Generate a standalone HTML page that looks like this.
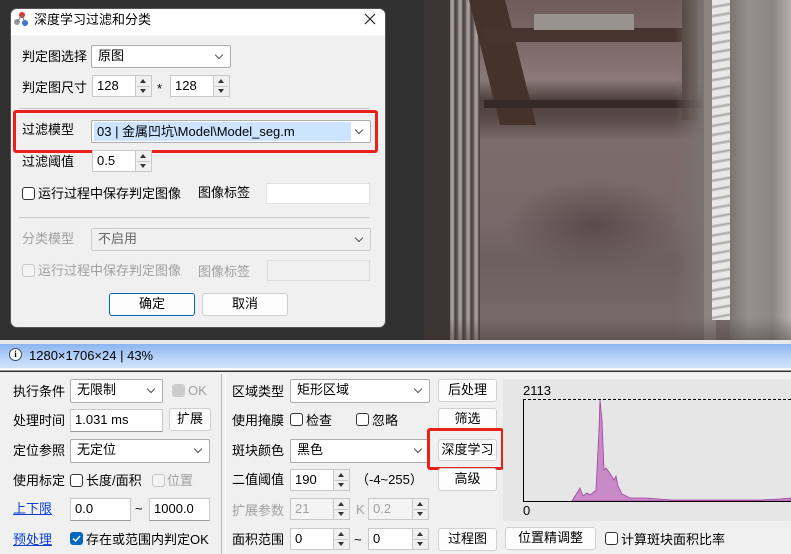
<!DOCTYPE html>
<html><head><meta charset="utf-8">
<style>
*{box-sizing:border-box;margin:0;padding:0}
body{width:791px;height:554px;overflow:hidden;position:relative;background:#303030;font-family:"Liberation Sans","Noto Sans CJK SC",sans-serif;font-size:13px;color:#000}
.a{position:absolute;white-space:nowrap}
.t{position:absolute;white-space:nowrap;line-height:16px}
.combo{position:absolute;background:#fff;border:1px solid #adadad;border-radius:2px;padding-left:6px;line-height:20px}
.combo:after{content:"";position:absolute;right:8px;top:6px;width:5px;height:5px;border-right:1px solid #555;border-bottom:1px solid #555;transform:rotate(45deg)}
.inp{position:absolute;background:#fff;border:1px solid #c8c8c8;border-bottom-color:#999;padding-left:4px;line-height:20px}
.spin{position:absolute;background:#fff;border:1px solid #c8c8c8;padding-left:4px;line-height:20px}
.spin i{position:absolute;right:0;top:0;width:16px;height:100%;background:#f0f0f0;border-left:1px solid #c8c8c8}
.spin i:before{content:"";position:absolute;left:4px;top:3px;border:3px solid transparent;border-bottom:4px solid #333;border-top:none}
.spin i:after{content:"";position:absolute;left:4px;bottom:3px;border:3px solid transparent;border-top:4px solid #333;border-bottom:none}
.spin i b{position:absolute;left:1px;right:1px;top:50%;border-top:1px solid #c8c8c8}
.btn{position:absolute;background:#fdfdfd;border:1px solid #d0d0d0;border-radius:3px;text-align:center;line-height:20px}
.cb{position:absolute;width:13px;height:13px;border:1px solid #333;border-radius:3px;background:#fff}
.dis{color:#a0a0a0}
.dis.cb,.cb.dis{border-color:#c8c8c8;background:#f4f4f4}
.link{color:#0a3fd6;text-decoration:underline}
</style></head><body>

<!-- photo -->
<div class="a" style="left:424px;top:0;width:367px;height:340px;overflow:hidden;background:#776866">
  <!-- floor -->
  <div class="a" style="left:0;top:0;width:367px;height:340px;background:linear-gradient(180deg,#6e5c58 0,#7e6c6a 50px,#8a7a78 80px,#4c403c 100px,#5a4c48 120px,#7c6c6a 140px,#786a68 220px,#6c605e 260px,#7a6e6c 340px)"></div>
  <div class="a" style="left:80px;top:180px;width:180px;height:90px;border-radius:50%;background:radial-gradient(#5a4c4a,rgba(90,76,74,0) 70%)"></div>
  <!-- left bars -->
  <div class="a" style="left:0;top:0;width:26px;height:340px;background:#3a3434"></div>
  <div class="a" style="left:26px;top:0;width:30px;height:340px;background:repeating-linear-gradient(90deg,#8a8280 0,#b0a8a4 3px,#4a4040 5px,#6a605c 8px)"></div>
  <!-- bracket -->
  <div class="a" style="left:45px;top:0;width:36px;height:125px;background:#45322a;transform:skewX(14deg);transform-origin:top"></div>
  <div class="a" style="left:60px;top:28px;width:200px;height:14px;background:#46352e"></div>
  <div class="a" style="left:110px;top:14px;width:100px;height:16px;background:#9a928c"></div>
  <div class="a" style="left:258px;top:0;width:16px;height:120px;background:#4a3a32"></div>
  <div class="a" style="left:60px;top:100px;width:220px;height:8px;background:#352a26"></div>
  <!-- right rail -->
  <div class="a" style="left:250px;top:0;width:30px;height:340px;background:linear-gradient(90deg,rgba(0,0,0,0),#7a7270)"></div>
  <div class="a" style="left:280px;top:0;width:12px;height:340px;background:#8c8482"></div>
  <div class="a" style="left:288px;top:0;width:18px;height:320px;background:repeating-linear-gradient(170deg,#e8e8e8 0,#e8e8e8 5px,#a8a4a2 7px,#e0e0e0 9px)"></div>
  <div class="a" style="left:306px;top:0;width:61px;height:340px;background:linear-gradient(90deg,#7a7472,#94908c 30%,#8a8682 70%,#b4b0ae)"></div>
  <div class="a" style="left:0;top:318px;width:367px;height:22px;background:linear-gradient(180deg,rgba(0,0,0,0),rgba(60,50,48,.4))"></div>
</div>

<!-- dialog -->
<div class="a" style="left:10px;top:8px;width:376px;height:320px;background:#f0f0f0;border-radius:7px;overflow:hidden;border:1px solid #555">
  <div class="a" style="left:0;top:0;width:376px;height:26px;background:#fff"></div>
</div>
<svg class="a" style="left:13px;top:11px" width="16" height="16"><circle cx="9" cy="4" r="3" fill="#e0342c"/><circle cx="4" cy="11" r="3" fill="#999"/><circle cx="12" cy="12" r="3" fill="#2a7ad8"/><path d="M9 4L4 11M9 4L12 12" stroke="#777" stroke-width="1"/></svg>
<div class="t" style="left:34px;top:12px;font-size:13px">深度学习过滤和分类</div>
<svg class="a" style="left:364px;top:13px" width="12" height="12"><path d="M1 1L11 11M11 1L1 11" stroke="#222" stroke-width="1.2"/></svg>

<div class="t" style="left:22px;top:49px">判定图选择</div>
<div class="combo" style="left:91px;top:45px;width:140px;height:23px">原图</div>
<div class="t" style="left:22px;top:80px">判定图尺寸</div>
<div class="spin" style="left:92px;top:75px;width:60px;height:22px">128<i><b></b></i></div>
<div class="t" style="left:157px;top:81px">*</div>
<div class="spin" style="left:170px;top:75px;width:60px;height:22px">128<i><b></b></i></div>
<div class="a" style="left:19px;top:108px;width:350px;border-top:1px solid #c8c8c8"></div>
<div class="a" style="left:13px;top:110px;width:365px;height:43px;border:3px solid #e8211a;border-radius:3px"></div>
<div class="t" style="left:22px;top:122px">过滤模型</div>
<div class="combo" style="left:91px;top:120px;width:280px;height:23px;padding-left:2px"><span style="display:inline-block;background:#cce4ff;width:257px;height:19px;line-height:19px;padding-left:3px;margin-top:1px;vertical-align:top">03 | 金属凹坑\Model\Model_seg.m</span></div>
<div class="t" style="left:22px;top:154px">过滤阈值</div>
<div class="spin" style="left:92px;top:150px;width:60px;height:22px">0.5<i><b></b></i></div>
<div class="cb" style="left:22px;top:187px"></div>
<div class="t" style="left:38px;top:186px">运行过程中保存判定图像</div>
<div class="t" style="left:198px;top:185px">图像标签</div>
<div class="inp" style="left:266px;top:183px;width:104px;height:21px;border-color:#e0e0e0"></div>
<div class="a" style="left:19px;top:217px;width:350px;border-top:1px solid #c8c8c8"></div>
<div class="t dis" style="left:22px;top:231px">分类模型</div>
<div class="combo" style="left:91px;top:228px;width:280px;height:23px;background:#f0f0f0;border-color:#ccc;color:#666">不启用</div>
<div class="cb dis" style="left:22px;top:264px"></div>
<div class="t dis" style="left:38px;top:263px">运行过程中保存判定图像</div>
<div class="t dis" style="left:198px;top:264px">图像标签</div>
<div class="inp" style="left:267px;top:260px;width:103px;height:21px;background:#f0f0f0;border-color:#ddd"></div>
<div class="btn" style="left:109px;top:293px;width:86px;height:23px;border-color:#0067c0;border-width:1px">确定</div>
<div class="btn" style="left:202px;top:293px;width:86px;height:23px">取消</div>

<!-- status bar -->
<div class="a" style="left:0;top:340px;width:791px;height:4px;background:#e8e8e8"></div>
<div class="a" style="left:0;top:344px;width:791px;height:24px;background:linear-gradient(180deg,#8cb4f0,#b8d4f8 60%,#d0e4fa)"></div>
<div class="a" style="left:0;top:368px;width:791px;height:3px;background:#fafafa;border-bottom:1px solid #999"></div>
<div class="a" style="left:9px;top:348px;width:13px;height:13px;border-radius:50%;background:#fff;border:1px solid #445;font-size:9px;font-weight:bold;text-align:center;line-height:11px;font-family:'Liberation Serif',serif">i</div>
<div class="t" style="left:29px;top:348px">1280×1706×24 | 43%</div>

<!-- panel -->
<div class="a" style="left:0;top:372px;width:791px;height:182px;background:#f0f0f0"></div>
<div class="a" style="left:221px;top:374px;height:180px;border-left:1px solid #bbb"></div>
<div class="a" style="left:225px;top:374px;height:180px;border-left:1px solid #fff"></div>

<div class="t" style="left:13px;top:384px">执行条件</div>
<div class="combo" style="left:70px;top:379px;width:93px;height:24px">无限制</div>
<div class="cb dis" style="left:172px;top:384px;background:#ccc;border-color:#ccc"></div>
<div class="t dis" style="left:188px;top:383px">OK</div>
<div class="t" style="left:13px;top:413px">处理时间</div>
<div class="inp" style="left:70px;top:409px;width:93px;height:23px">1.031 ms</div>
<div class="btn" style="left:169px;top:408px;width:42px;height:23px">扩展</div>
<div class="t" style="left:13px;top:443px">定位参照</div>
<div class="combo" style="left:70px;top:439px;width:140px;height:24px">无定位</div>
<div class="t" style="left:13px;top:473px">使用标定</div>
<div class="cb" style="left:70px;top:474px"></div>
<div class="t" style="left:86px;top:473px">长度/面积</div>
<div class="cb dis" style="left:152px;top:474px"></div>
<div class="t dis" style="left:167px;top:473px">位置</div>
<div class="t link" style="left:13px;top:501px">上下限</div>
<div class="inp" style="left:70px;top:498px;width:61px;height:23px">0.0</div>
<div class="t" style="left:135px;top:501px">~</div>
<div class="inp" style="left:149px;top:498px;width:61px;height:23px">1000.0</div>
<div class="t link" style="left:13px;top:532px">预处理</div>
<div class="cb" style="left:70px;top:532px;background:#0067c0;border-color:#0067c0"><svg width="11" height="11" style="position:absolute;left:0;top:0"><path d="M2 5.5L4.5 8L9 3" stroke="#fff" stroke-width="1.4" fill="none"/></svg></div>
<div class="t" style="left:86px;top:532px">存在或范围内判定OK</div>

<div class="t" style="left:232px;top:384px">区域类型</div>
<div class="combo" style="left:290px;top:379px;width:140px;height:24px">矩形区域</div>
<div class="btn" style="left:438px;top:379px;width:59px;height:23px">后处理</div>
<div class="t" style="left:232px;top:413px">使用掩膜</div>
<div class="cb" style="left:290px;top:413px"></div>
<div class="t" style="left:306px;top:413px">检查</div>
<div class="cb" style="left:356px;top:413px"></div>
<div class="t" style="left:372px;top:413px">忽略</div>
<div class="btn" style="left:438px;top:408px;width:59px;height:23px">筛选</div>
<div class="t" style="left:232px;top:443px">斑块颜色</div>
<div class="combo" style="left:290px;top:439px;width:140px;height:24px">黑色</div>
<div class="btn" style="left:438px;top:439px;width:59px;height:22px">深度学习</div>
<div class="a" style="left:427px;top:428px;width:77px;height:42px;border:3px solid #e8211a;border-radius:3px"></div>
<div class="t" style="left:232px;top:472px">二值阈值</div>
<div class="spin" style="left:290px;top:469px;width:60px;height:22px">190<i><b></b></i></div>
<div class="t" style="left:356px;top:472px">（-4~255）</div>
<div class="btn" style="left:438px;top:468px;width:59px;height:23px">高级</div>
<div class="t dis" style="left:232px;top:503px">扩展参数</div>
<div class="spin dis" style="left:290px;top:498px;width:60px;height:22px;background:#f4f4f4">21<i><b></b></i></div>
<div class="t dis" style="left:356px;top:502px">K</div>
<div class="spin dis" style="left:368px;top:498px;width:61px;height:22px;background:#f4f4f4">0.2<i><b></b></i></div>
<div class="t" style="left:232px;top:532px">面积范围</div>
<div class="spin" style="left:290px;top:528px;width:60px;height:22px">0<i><b></b></i></div>
<div class="t" style="left:354px;top:532px">~</div>
<div class="spin" style="left:368px;top:528px;width:61px;height:22px">0<i><b></b></i></div>
<div class="btn" style="left:438px;top:528px;width:59px;height:23px">过程图</div>
<div class="btn" style="left:505px;top:527px;width:91px;height:23px">位置精调整</div>
<div class="cb" style="left:605px;top:532px"></div>
<div class="t" style="left:621px;top:532px">计算斑块面积比率</div>

<!-- histogram -->
<div class="a" style="left:503px;top:379px;width:288px;height:142px;background:#e6e6e6"></div>
<div class="t" style="left:523px;top:383px">2113</div>
<div class="t" style="left:523px;top:503px">0</div>
<svg class="a" style="left:0;top:0" width="791" height="554">
<path d="M572 501L580 488L583 496L587 493L590 495L596 490L597 470L599 430L600 400L602 420L604 470L606 468L609 472L614 480L616 476L618 486L622 494L630 498L645 498L672 500L700 500L760 500L780 499L791 498L791 501Z" fill="#c98ac8" stroke="#a040a0" stroke-width="0.8"/>
<path d="M523.5 501V399.5" fill="none" stroke="#000" stroke-width="1"/>
<path d="M523 399.5H791" stroke="#000" stroke-width="1" stroke-dasharray="3 2"/>
<path d="M523 501.5H791" stroke="#000" stroke-width="1"/>
</svg>
</body></html>
